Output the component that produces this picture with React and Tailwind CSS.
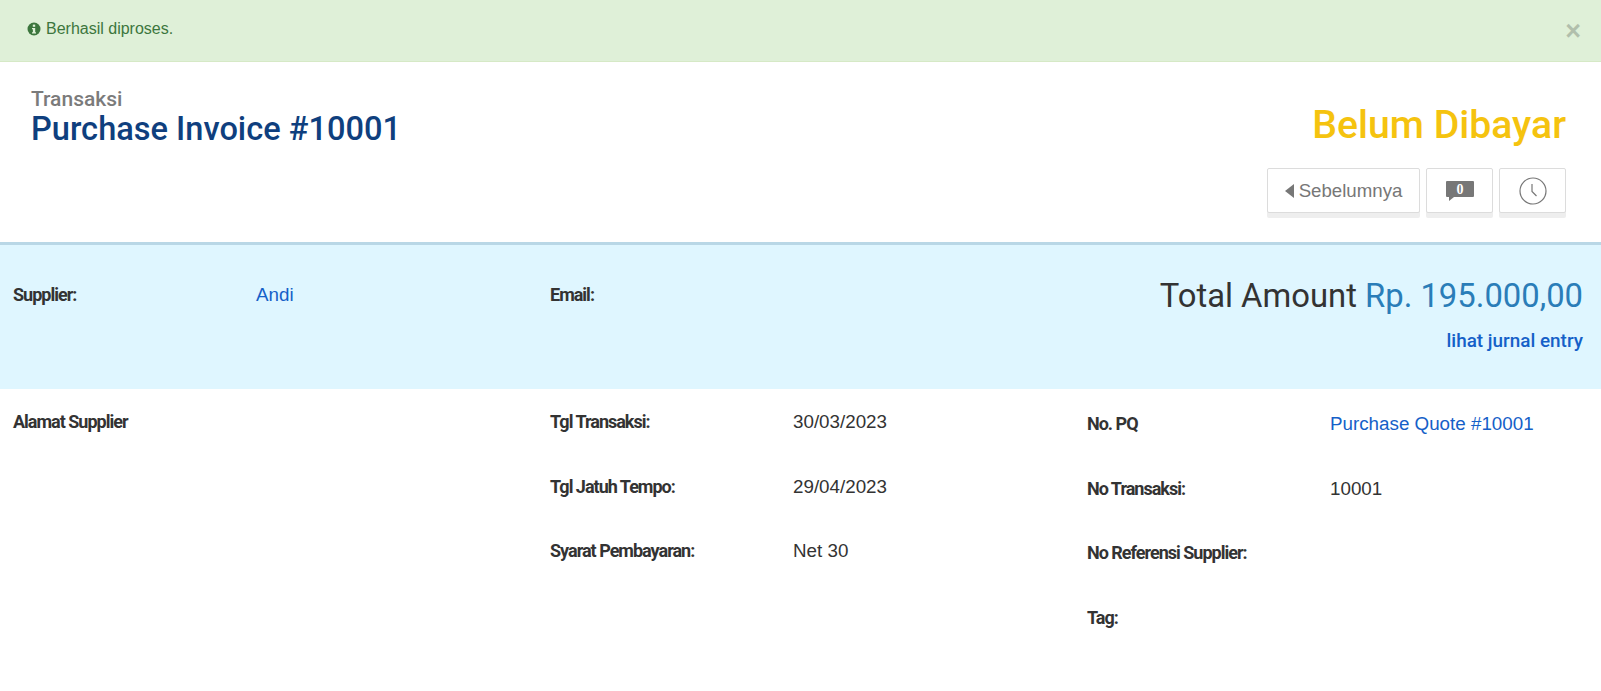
import React from "react";

const Label = ({ children }) => (
  <span className="font-bold text-[18px] leading-[24px] tracking-[-1px] text-[#333]">{children}</span>
);

const Row = ({ label, value, link, className = "" }) => (
  <div className={`flex h-[64.5px] ${className}`}>
    <div className="w-[243px] shrink-0">
      <Label>{label}</Label>
    </div>
    <div className={`leading-[24px] text-[18.8px] font-['Liberation_Sans',sans-serif] ${link ? "text-[#1560c8]" : "text-[#333]"}`}>{value}</div>
  </div>
);

const App = () => {
  return (
    <div className="min-h-[691px] bg-white font-['Roboto',sans-serif] overflow-hidden">
      {/* Alert */}
      <div className="h-[62px] bg-[#dff0d8] border-b border-[#d6e9c6] flex justify-between pl-[27px] pr-[20px]">
        <div className="flex items-center gap-[5px] h-[57px] text-[16px] text-[#3c763d] font-['Liberation_Sans',sans-serif]">
          <svg width="14" height="14" viewBox="0 0 14 14">
            <circle cx="7" cy="7" r="6.5" fill="#3c763d" />
            <rect x="5.8" y="2.6" width="2.4" height="2.2" fill="#dff0d8" />
            <path d="M5 6h3.2v4.2H9v1.2H5v-1.2h.9V7.2H5z" fill="#dff0d8" />
          </svg>
          <span>Berhasil diproses.</span>
        </div>
        <span className="text-[27px] font-bold leading-none text-black opacity-20 mt-[18px] font-['Liberation_Sans',sans-serif]">×</span>
      </div>

      {/* Header */}
      <div className="h-[180px] flex justify-between pl-[31px] pr-[35px]">
        <div className="pt-[26px]">
          <div className="text-[21px] leading-[22px] font-medium text-[#7b7b7b]">Transaksi</div>
          <div className="text-[32.6px] leading-[38px] font-medium text-[#0f3f7e]">Purchase Invoice #10001</div>
        </div>
        <div className="flex flex-col items-end pt-[38px]">
          <div className="text-[39.2px] leading-[50px] font-medium text-[#f5c30f]">Belum Dibayar</div>
          <div className="flex gap-[6px] mt-[18px]">
            <button className="w-[153px] h-[45px] pt-[1px] flex items-center justify-center gap-[4px] bg-white border border-[#dcdcdc] rounded-[2px] shadow-[0_5px_0_#eeeeee] text-[18.67px] text-[#777] font-['Liberation_Sans',sans-serif]">
              <svg width="10" height="14" viewBox="0 0 10 14"><path d="M9 0v14L0 7z" fill="#777" /></svg>
              Sebelumnya
            </button>
            <button className="w-[67px] h-[45px] pt-[1px] flex items-center justify-center bg-white border border-[#dcdcdc] rounded-[2px] shadow-[0_5px_0_#eeeeee]">
              <svg width="30" height="22" viewBox="0 0 30 22">
                <path d="M2 1h26a1 1 0 0 1 1 1v14a1 1 0 0 1-1 1H9l-5 4v-4H2a1 1 0 0 1-1-1V2a1 1 0 0 1 1-1z" fill="#777" />
                <text x="15" y="13.5" textAnchor="middle" fontSize="14" fontWeight="700" fontFamily="'Liberation Serif', serif" fill="#fff">0</text>
              </svg>
            </button>
            <button className="w-[67px] h-[45px] pt-[1px] flex items-center justify-center bg-white border border-[#dcdcdc] rounded-[2px] shadow-[0_5px_0_#eeeeee]">
              <svg width="28" height="28" viewBox="0 0 28 28" fill="none" stroke="#777" strokeWidth="1.2">
                <circle cx="14" cy="14" r="13" />
                <path d="M13 7v7.5l4.5 4.5" />
              </svg>
            </button>
          </div>
        </div>
      </div>

      {/* Summary band */}
      <div className="h-[147px] bg-[#dff6ff] border-t-[3px] border-[#b9d7e6] flex pl-[13px] pr-[18px] pt-[38px]">
        <div className="w-[537px] shrink-0">
          <Row label="Supplier:" value="Andi" link />
        </div>
        <div className="w-[300px] shrink-0">
          <Label>Email:</Label>
        </div>
        <div className="flex-1 text-right">
          <div className="text-[32.8px] leading-[32px] -mt-[3px] text-[#333]">
            Total Amount <span className="text-[#2a7db8]">Rp. 195.000,00</span>
          </div>
          <div className="mt-[17px] text-[18.9px] leading-[24px] font-medium text-[#1560c8]">lihat jurnal entry</div>
        </div>
      </div>

      {/* Detail */}
      <div className="flex pl-[13px] pt-[21px]">
        <div className="w-[537px] shrink-0">
          <Label>Alamat Supplier</Label>
        </div>
        <div className="w-[537px] shrink-0">
          <Row label="Tgl Transaksi:" value="30/03/2023" />
          <Row label="Tgl Jatuh Tempo:" value="29/04/2023" />
          <Row label="Syarat Pembayaran:" value="Net 30" />
        </div>
        <div className="flex-1 pt-[2px]">
          <Row label="No. PQ" value="Purchase Quote #10001" link />
          <Row label="No Transaksi:" value="10001" />
          <Row label="No Referensi Supplier:" />
          <Row label="Tag:" />
        </div>
      </div>
    </div>
  );
};

export default App;
